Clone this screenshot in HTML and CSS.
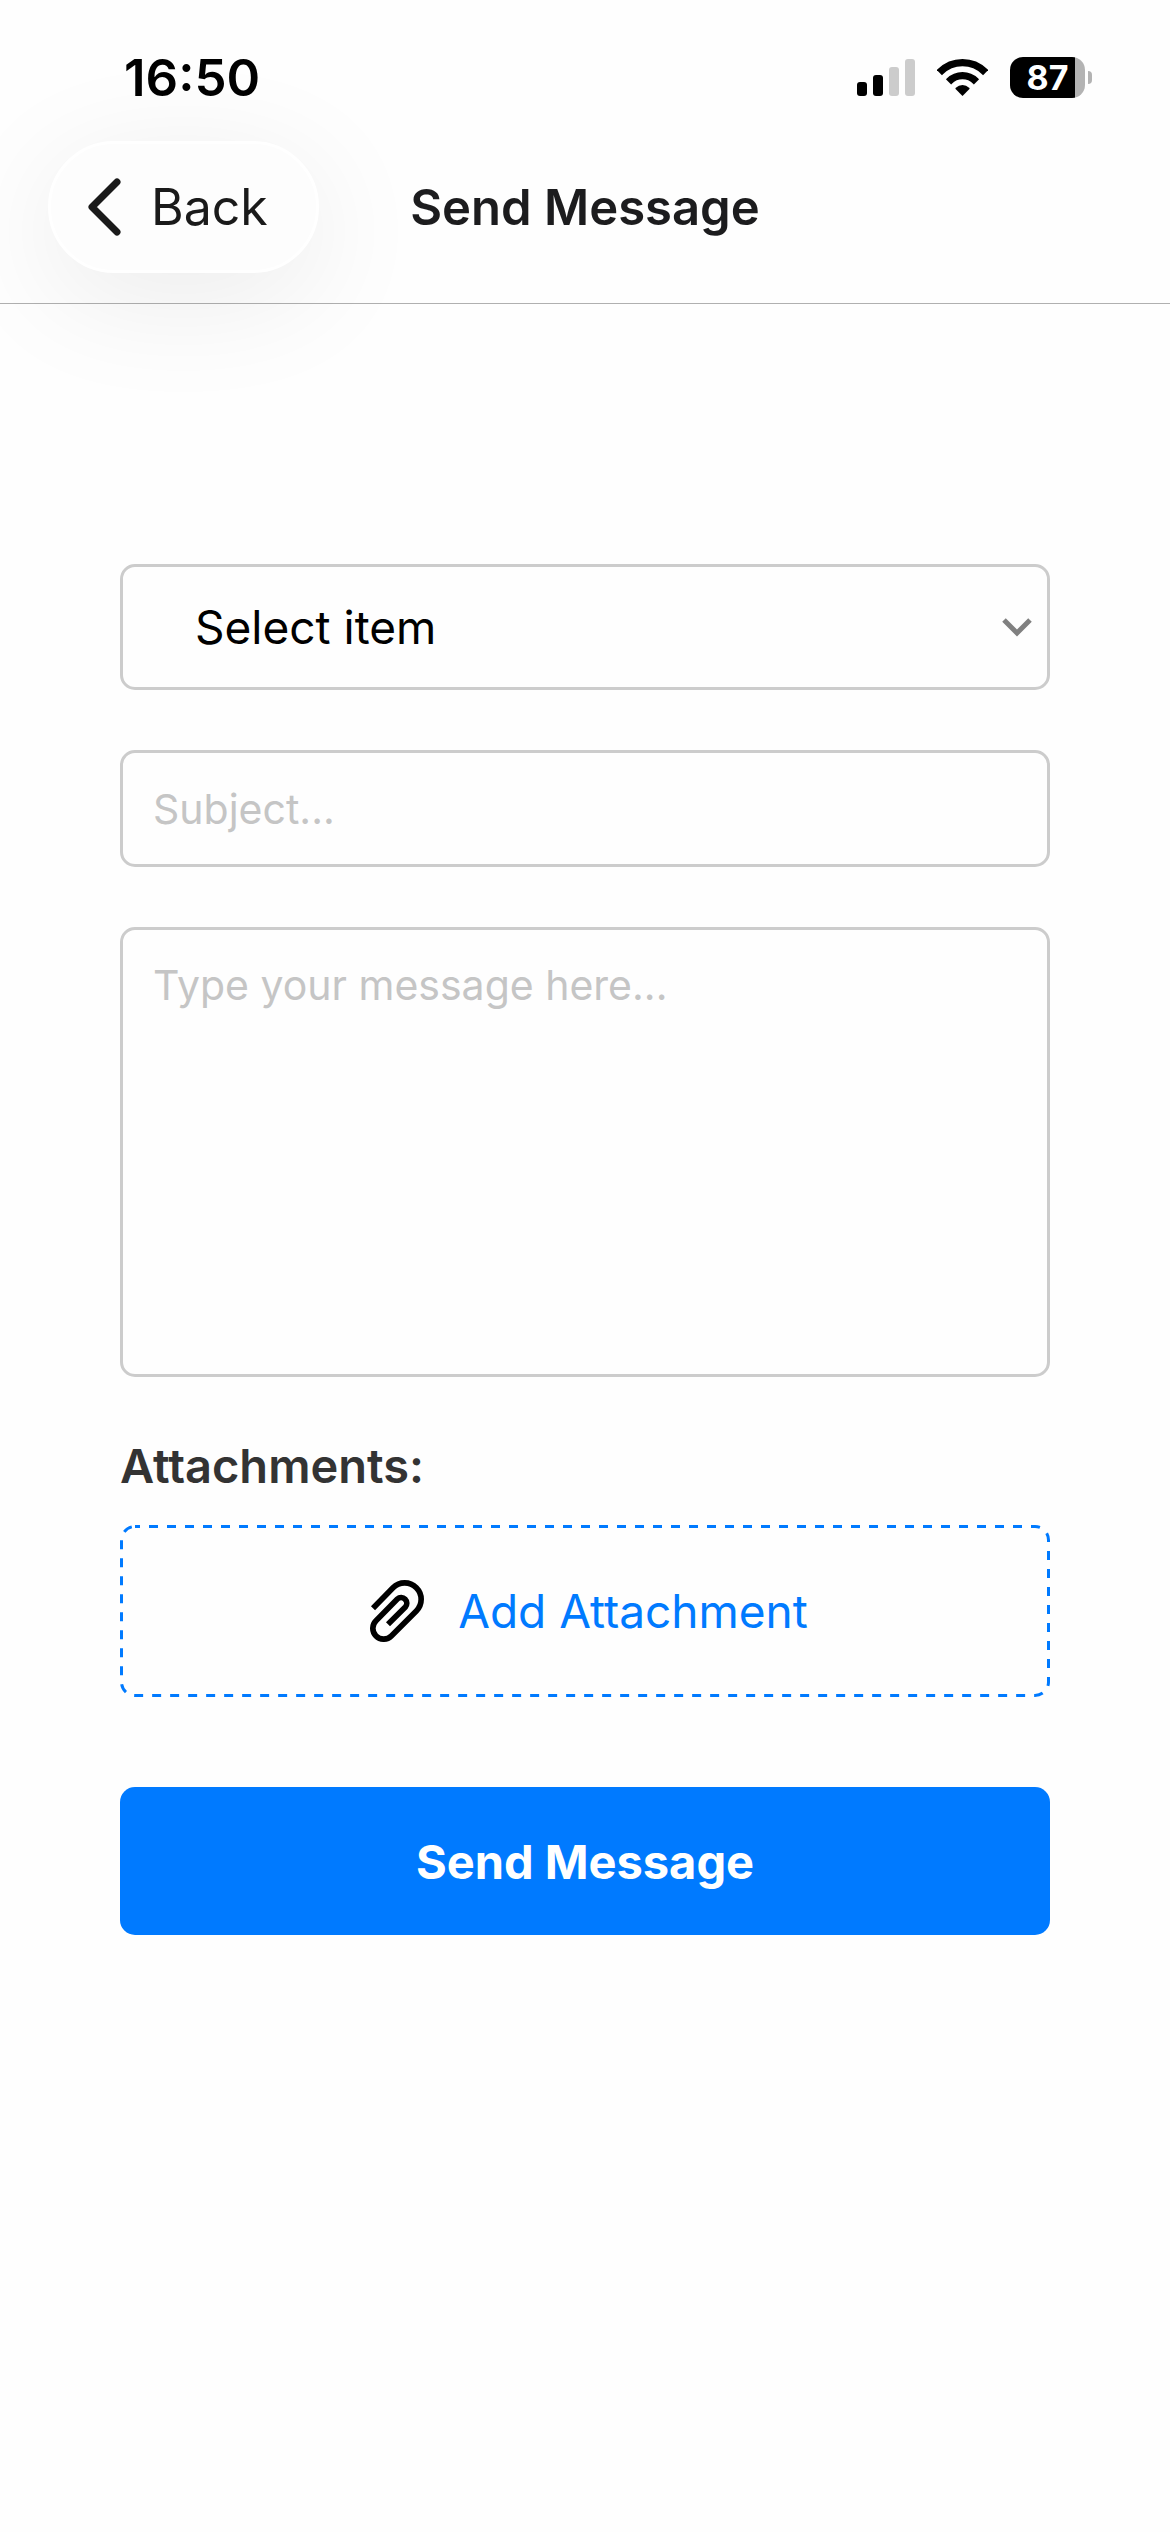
FILE: index.html
```html
<!DOCTYPE html>
<html lang="en">
<head>
  <meta charset="UTF-8" />
  <meta name="viewport" content="width=device-width, initial-scale=1.0"/>
  <title>Send Message</title>
  <link rel="stylesheet" href="styles.css">
</head>
<body>
  <div class="status-bar">
    <time class="clock">16:50</time>
    <div class="status-icons">
      <svg class="signal" width="58" height="37" viewBox="0 0 58 37">
        <rect x="0" y="23" width="10" height="14" rx="3"/>
        <rect x="16" y="16" width="10" height="21" rx="3"/>
        <rect class="off" x="32" y="8" width="10" height="29" rx="3"/>
        <rect class="off" x="48" y="0" width="10" height="37" rx="3"/>
      </svg>
      <svg class="wifi" width="51" height="37" viewBox="0 0 152 111">
        <clipPath id="fan"><path d="M76 111 L-4 30 V-10 H156 V30 Z"/></clipPath>
        <g clip-path="url(#fan)">
          <circle cx="76" cy="106" r="95" fill="none" stroke="#000" stroke-width="22"/>
          <circle cx="76" cy="106" r="56" fill="none" stroke="#000" stroke-width="22"/>
          <circle cx="76" cy="106" r="28"/>
        </g>
      </svg>
      <div class="battery"><span class="level">87</span></div>
    </div>
  </div>

  <header class="nav">
    <button type="button" class="back">
      <svg width="34" height="58" viewBox="0 0 34 58"><path d="M30 4 L5 29 L30 54" fill="none" stroke="#1a1a1a" stroke-width="7" stroke-linecap="round" stroke-linejoin="round"/></svg>
      Back
    </button>
    <h1 class="title">Send Message</h1>
  </header>

  <form class="message-form">
    <div class="select-wrap">
      <select class="field item" aria-label="Item">
        <option>Select item</option>
      </select>
      <svg class="arrow" width="30" height="20" viewBox="0 0 30 20"><path d="M2 2 L15 15 L28 2" fill="none" stroke="#808080" stroke-width="5"/></svg>
    </div>
    <input type="text" class="field subject" placeholder="Subject..." aria-label="Subject">
    <textarea class="field message" placeholder="Type your message here..." aria-label="Message"></textarea>

    <h2 class="attach-label">Attachments:</h2>
    <button type="button" class="attach">
      <svg class="dashes"><rect x="1.5" y="1.5" rx="13.5"/></svg>
      <svg width="54" height="62" viewBox="0 0 162 186"><path d="M9 85 L69 23 A49 49 0 0 1 139 93 L64 168 A32 32 0 0 1 18 122 L82 57 A17 17 0 0 1 106 81 L54 133" fill="none" stroke="#000" stroke-width="17"/></svg>
      Add Attachment
    </button>

    <button type="submit" class="send">Send Message</button>
  </form>
</body>
</html>
```
FILE: styles.css
```css
* {
  box-sizing: border-box;
}

body {
  margin: 0;
  background-color: #fefefe;
  font-family: Inter, "Liberation Sans", sans-serif;
  color: #000;
}

button, input, select, textarea {
  font-family: inherit;
}

.status-bar {
  display: flex;
  justify-content: space-between;
  align-items: center;
  height: 141px;
  padding: 14px 78px 0 124px;
}

.clock {
  font-size: 51px;
  font-weight: 600;
}

.status-icons {
  display: flex;
  align-items: center;
  gap: 22px;
}

.signal .off {
  fill: #ccc;
}

.battery {
  position: relative;
  width: 75px;
  height: 41px;
  margin-right: 7px;
  border-radius: 13px;
  background: linear-gradient(to right, #000 87%, #b3b3b3 87%);
  text-align: center;
}

/* battery tip */
.battery::after {
  content: "";
  position: absolute;
  left: 78px;
  top: 14px;
  width: 4px;
  height: 13px;
  border-radius: 0 4px 4px 0;
  background-color: #b3b3b3;
}

.level {
  color: #fff;
  font-size: 34px;
  font-weight: 700;
  line-height: 41px;
}

.nav {
  display: grid;
  grid-template-columns: 1fr auto 1fr;
  align-items: center;
  padding: 0 48px 30px;
  border-bottom: 1px solid #b0b0b0;
}

.back {
  display: flex;
  align-items: center;
  justify-self: start;
  gap: 30px;
  height: 132px;
  padding: 0 48px 0 36px;
  border: 3px solid #fff;
  border-radius: 66px;
  background-color: #fdfdfd;
  box-shadow: 0 24px 120px rgba(0, 0, 0, 0.08);
  color: #1a1a1a;
  font-size: 50px;
}

.title {
  margin: 0;
  color: #1c1c1e;
  font-size: 49px;
  font-weight: 600;
}

.message-form {
  display: flex;
  flex-direction: column;
  padding: 260px 120px 60px;
}

.field {
  display: block;
  width: 100%;
  margin: 0 0 60px;
  border: 3px solid #ccc;
  border-radius: 15px;
  background-color: transparent;
  color: #000;
  font-size: 41px;
  outline: none;
}

.field::placeholder {
  color: #c5c5c5;
  opacity: 1;
}

.select-wrap {
  position: relative;
}

.item {
  height: 126px;
  padding: 0 72px;
  appearance: none;
  font-size: 46px;
}

.arrow {
  position: absolute;
  right: 18px;
  top: 54px;
}

.subject {
  height: 117px;
  padding: 0 30px;
}

.message {
  height: 450px;
  padding: 30px;
  line-height: 51px;
  resize: none;
}

.attach-label {
  margin: 0 0 30px;
  color: #333;
  font-size: 47px;
  font-weight: 600;
  line-height: 58px;
}

.attach {
  position: relative;
  display: flex;
  align-items: center;
  justify-content: center;
  gap: 34px;
  height: 172px;
  margin-bottom: 90px;
  padding: 0 0 0 8px;
  border: none;
  background: none;
  color: #007aff;
  font-size: 46px;
}

/* dashed outline, 9px on and 9px off */
.dashes {
  position: absolute;
  inset: 0;
  width: 100%;
  height: 100%;
}

.dashes rect {
  width: calc(100% - 3px);
  height: calc(100% - 3px);
  fill: none;
  stroke: #007aff;
  stroke-width: 3px;
  stroke-dasharray: 9 9;
  stroke-dashoffset: 4px;
}

.send {
  height: 148px;
  border: none;
  border-radius: 15px;
  background-color: #007aff;
  color: #fff;
  font-size: 47px;
  font-weight: 700;
}
```
